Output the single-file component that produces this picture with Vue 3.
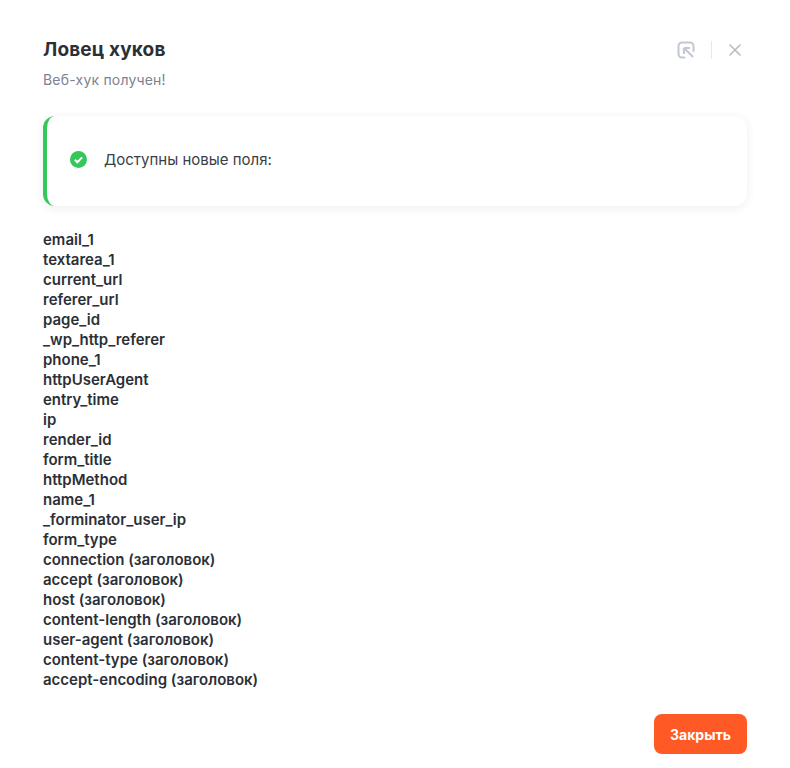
<template>
  <div class="modal">
    <div class="modal-head">
      <div>
        <h2 class="modal-title">Ловец хуков</h2>
        <p class="modal-sub">Веб-хук получен!</p>
      </div>
      <div class="modal-actions">
        <button class="icon-btn">
          <svg width="18" height="18" viewBox="0 0 18 18" fill="none" stroke="#c3c7d1" stroke-width="2">
            <path d="M7.500 16.500H5a3.500 3.500 0 0 1-3.500-3.500V5A3.500 3.500 0 0 1 5 1.500h8A3.500 3.500 0 0 1 16.500 5v5" stroke-linecap="round" />
            <path d="M7 7h6M7 7v6M7 7l9 9" />
          </svg>
        </button>
        <span class="divider"></span>
        <button class="icon-btn">
          <svg width="14" height="14" viewBox="0 0 14 14" fill="none" stroke="#b4b9c6" stroke-width="1.5">
            <path d="M1.500 1.500l11 11M12.500 1.500l-11 11" />
          </svg>
        </button>
      </div>
    </div>

    <div class="notice">
      <svg class="notice-icon" width="17" height="17" viewBox="0 0 16 16">
        <circle cx="8" cy="8" r="8" fill="#34c759" />
        <path d="M4.500 8.300l2.400 2.300 4.500-4.600" fill="none" stroke="#fff" stroke-width="2" />
      </svg>
      <span>Доступны новые поля:</span>
    </div>

    <ul class="fields">
      <li v-for="field in fields" :key="field">{{ field }}</li>
    </ul>

    <div class="modal-foot">
      <button class="close-btn">Закрыть</button>
    </div>
  </div>
</template>

<script setup>
const fields = [
  'email_1',
  'textarea_1',
  'current_url',
  'referer_url',
  'page_id',
  '_wp_http_referer',
  'phone_1',
  'httpUserAgent',
  'entry_time',
  'ip',
  'render_id',
  'form_title',
  'httpMethod',
  'name_1',
  '_forminator_user_ip',
  'form_type',
  'connection (заголовок)',
  'accept (заголовок)',
  'host (заголовок)',
  'content-length (заголовок)',
  'user-agent (заголовок)',
  'content-type (заголовок)',
  'accept-encoding (заголовок)'
]
</script>

<style>
body {
  background: #fff;
}
</style>

<style scoped>
.modal {
  width: 790px;
  height: 768px;
  box-sizing: border-box;
  padding: 38px 43px 14px;
  background: #fff;
  color: #2c2f36;
  font-family: Inter, sans-serif;
  display: flex;
  flex-direction: column;
}

.modal-head {
  display: flex;
  justify-content: space-between;
  align-items: flex-start;
}

.modal-title {
  margin: 0;
  font-size: 19px;
  line-height: 24px;
  font-weight: 700;
  letter-spacing: 0.15px;
}

.modal-sub {
  margin: 7px 0 0;
  font-size: 14px;
  line-height: 22px;
  letter-spacing: 0.2px;
  color: #7c8291;
}

.modal-actions {
  display: flex;
  align-items: center;
  gap: 16px;
  height: 24px;
  margin-right: 5px;
}

.icon-btn {
  display: flex;
  padding: 0;
  border: 0;
  background: none;
  cursor: pointer;
}

.divider {
  width: 1px;
  height: 18px;
  background: #e6e8ec;
}

.notice {
  margin-top: 25px;
  height: 90px;
  box-sizing: border-box;
  display: flex;
  align-items: center;
  gap: 17px;
  padding: 0 0 3px 23px;
  background: #fff;
  border-left: 4px solid #34c759;
  border-radius: 12px;
  box-shadow: 0 2px 10px rgba(30, 40, 70, 0.08);
  font-size: 15px;
  color: #3a3e47;
}

.notice-icon {
  flex-shrink: 0;
}

.fields {
  list-style: none;
  margin: 24px 0 0;
  padding: 0;
  font-size: 15px;
  line-height: 20px;
  font-weight: 600;
}

.modal-foot {
  margin-top: auto;
  display: flex;
  justify-content: flex-end;
}

.close-btn {
  width: 93px;
  height: 40px;
  border: 0;
  border-radius: 8px;
  background: #ff5a26;
  color: #fff;
  font-family: inherit;
  font-size: 14px;
  font-weight: 700;
  cursor: pointer;
}
</style>
